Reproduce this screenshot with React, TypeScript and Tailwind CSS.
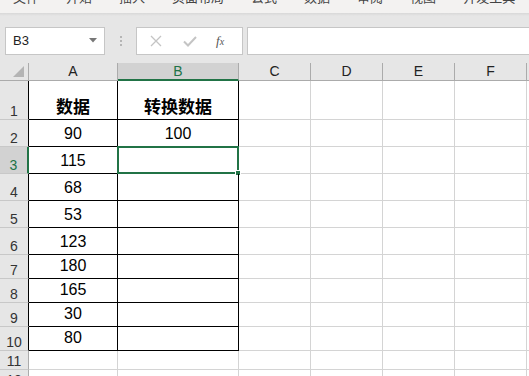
import React from 'react';

const tabs = ['文件', '开始', '插入', '页面布局', '公式', '数据', '审阅', '视图', '开发工具'];

const cols = ['A', 'B', 'C', 'D', 'E', 'F'];

interface Row {
  n: number;
  h: string;
  a?: string;
  b?: string;
  head?: boolean;
}

const rows: Row[] = [
  { n: 1, h: 'h-[39px]', a: '数据', b: '转换数据', head: true },
  { n: 2, h: 'h-[27px]', a: '90', b: '100' },
  { n: 3, h: 'h-[27px]', a: '115' },
  { n: 4, h: 'h-[27px]', a: '68' },
  { n: 5, h: 'h-[27px]', a: '53' },
  { n: 6, h: 'h-[27px]', a: '123' },
  { n: 7, h: 'h-[24px]', a: '180' },
  { n: 8, h: 'h-[24px]', a: '165' },
  { n: 9, h: 'h-[24px]', a: '30' },
  { n: 10, h: 'h-[24px]', a: '80' },
  { n: 11, h: 'h-[19px]' },
  { n: 12, h: 'h-[19px]' },
];

const font = "font-['Liberation_Sans','Noto_Sans_CJK_SC',sans-serif]";

function CellText({ text, bold }: { text?: string; bold?: boolean }) {
  if (!text) return null;
  return (
    <span
      className={
        bold
          ? "text-[17px] leading-none font-bold text-black font-['Noto_Sans_CJK_SC',sans-serif] mb-[5px]"
          : 'text-[16px] leading-none text-black mb-[4px]'
      }
    >
      {text}
    </span>
  );
}

export default function App() {
  return (
    <div className={`w-[529px] h-[376px] overflow-hidden bg-[#e6e6e6] ${font}`}>
      {/* ribbon tabs, mostly scrolled off */}
      <div className="h-[13px] bg-[#f3f2f1] overflow-hidden">
        <div className="flex gap-[27px] pl-[13px] -mt-[9px] text-[13px] leading-[13px] text-[#444]">
          {tabs.map((t) => (
            <span key={t}>{t}</span>
          ))}
        </div>
      </div>
      <div className="h-[3px] bg-gradient-to-b from-[#d8d8d8] to-[#e6e6e6]" />

      {/* formula bar */}
      <div className="flex items-center h-[47px] pt-[2px]">
        <div className="ml-[5px] w-[100px] h-[28px] bg-white border border-[#c6c6c6] flex items-center justify-between pl-[7px] pr-[7px]">
          <span className="text-[13px] text-[#222]">B3</span>
          <svg width="8" height="5" viewBox="0 0 8 5">
            <path d="M0 0h8L4 4.5z" fill="#777" />
          </svg>
        </div>
        <div className="w-[31px] flex flex-col items-center gap-[2px]">
          <span className="w-[2px] h-[2px] bg-[#b5b5b5]" />
          <span className="w-[2px] h-[2px] bg-[#b5b5b5]" />
          <span className="w-[2px] h-[2px] bg-[#b5b5b5]" />
        </div>
        <div className="w-[107px] h-[28px] bg-white border border-[#c6c6c6] flex items-center">
          <svg className="ml-[13px]" width="12" height="12" viewBox="0 0 12 12">
            <path d="M1 1l10 10M11 1L1 11" stroke="#c4c4c4" strokeWidth="1.3" />
          </svg>
          <svg className="ml-[21px]" width="14" height="12" viewBox="0 0 14 12">
            <path d="M1 6.5l4 4L13 2" stroke="#c4c4c4" strokeWidth="2" fill="none" />
          </svg>
          <span className="ml-[19px] text-[13px] italic font-['Liberation_Serif',serif] text-[#555]">
            f<span className="text-[10px]">x</span>
          </span>
        </div>
        <div className="ml-[4px] flex-1 h-[28px] bg-white border border-[#c6c6c6] border-r-0" />
      </div>

      {/* sheet */}
      <div className="grid grid-cols-[29px_89px_121px_72px_72px_72px_72px_1fr] bg-white">
        {/* column headers */}
        <div className="h-[18px] bg-[#e6e6e6] border-r border-b border-[#ababab] relative">
          <svg className="absolute right-[4px] bottom-[3px]" width="11" height="11" viewBox="0 0 11 11">
            <path d="M11 0v11H0z" fill="#b4b4b4" />
          </svg>
        </div>
        {cols.map((c) => {
          const sel = c === 'B';
          return (
            <div
              key={c}
              className={
                sel
                  ? 'h-[18px] bg-[#d2d2d2] border-r border-r-[#ababab] border-b-2 border-b-[#217346] flex items-center justify-center text-[14px] text-[#217346]'
                  : 'h-[18px] bg-[#e6e6e6] border-r border-b border-[#ababab] flex items-center justify-center text-[14px] text-[#222]'
              }
            >
              {c}
            </div>
          );
        })}
        <div className="h-[18px] bg-[#e6e6e6] border-b border-[#ababab]" />

        {rows.map((r) => {
          const inTable = r.n <= 10;
          const selRow = r.n === 3;
          return (
            <React.Fragment key={r.n}>
              <div
                className={
                  selRow
                    ? `${r.h} bg-[#d2d2d2] border-r-2 border-r-[#217346] border-b border-b-[#c8c8c8] flex items-end justify-center pb-[1px] text-[14px] leading-none text-[#217346]`
                    : `${r.h} bg-[#e6e6e6] border-r ${inTable ? 'border-r-black' : 'border-r-[#ababab]'} border-b border-b-[#c8c8c8] flex items-end justify-center pb-[1px] text-[14px] leading-none text-[#333]`
                }
              >
                {r.n}
              </div>
              <div
                className={`${r.h} border-r border-b ${inTable ? 'border-black' : 'border-[#d4d4d4]'} flex items-end justify-center`}
              >
                <CellText text={r.a} bold={r.head} />
              </div>
              <div
                className={`${r.h} border-r border-b ${inTable ? 'border-black' : 'border-[#d4d4d4]'} ${inTable ? '' : 'border-r-[#d4d4d4]'} flex items-end justify-center relative`}
              >
                <CellText text={r.b} bold={r.head} />
                {selRow && (
                  <>
                    <div className="absolute -left-[1px] -top-[1px] -right-[1px] -bottom-[1px] border-2 border-[#217346]" />
                    <div className="absolute -right-[3px] -bottom-[3px] w-[6px] h-[6px] bg-[#217346] border border-white" />
                  </>
                )}
              </div>
              {[0, 1, 2, 3].map((i) => (
                <div key={i} className={`${r.h} border-r border-b border-[#d4d4d4]`} />
              ))}
              <div className={`${r.h} border-b border-[#d4d4d4]`} />
            </React.Fragment>
          );
        })}
      </div>
    </div>
  );
}
